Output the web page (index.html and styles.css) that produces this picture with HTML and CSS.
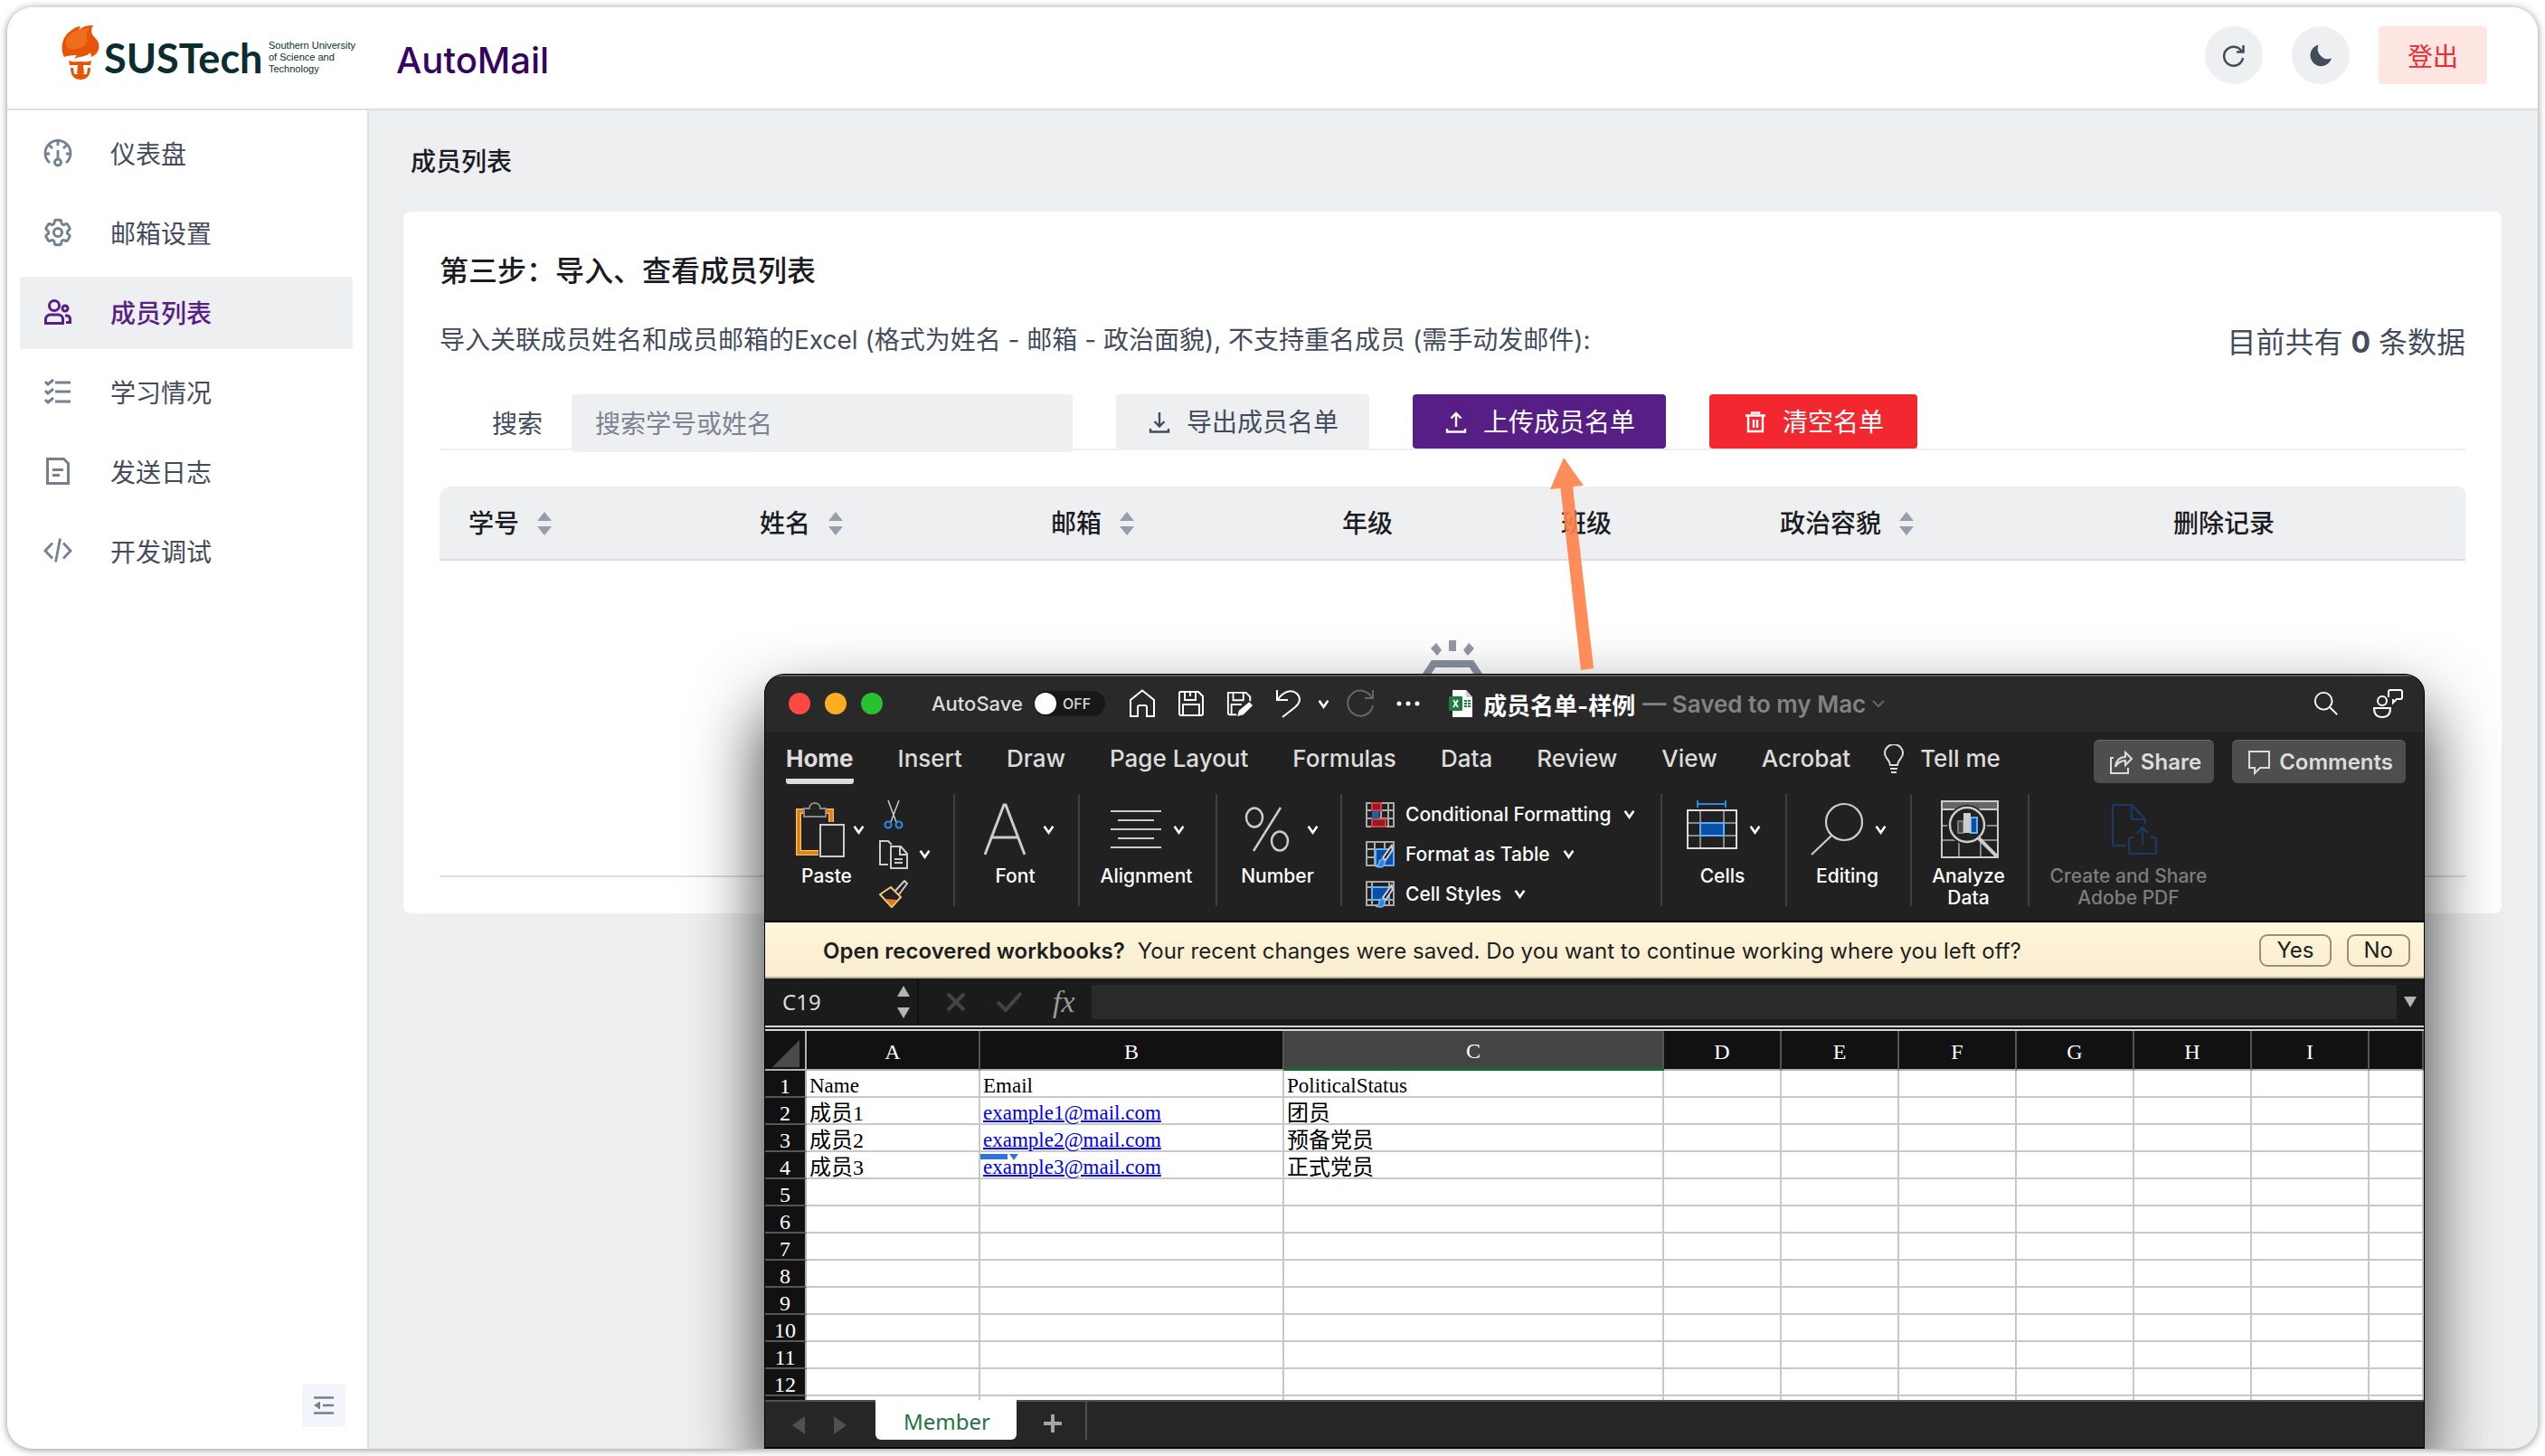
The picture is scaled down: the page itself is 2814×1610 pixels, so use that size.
FILE: index.html
```html
<!DOCTYPE html>
<html lang="zh-CN">
<head>
<meta charset="utf-8">
<title>AutoMail - 成员列表</title>
<meta name="viewport" content="width=device-width, initial-scale=1">
<link rel="stylesheet" href="styles.css">
</head>
<body>
<svg class="sprite" aria-hidden="true">
  <symbol id="chev" viewBox="0 0 12 12"><path d="M1.500 2.500L6 9l4.500-6.500" fill="none" stroke="currentColor" stroke-width="2.400"/></symbol>
  <symbol id="sort" viewBox="0 0 16 26"><path d="M8 0l8 10H0zM8 26l8-10H0z" fill="currentColor"/></symbol>
  <symbol id="brush" viewBox="0 0 20 28"><path d="M18 2L8 16l3 3L19 7z" fill="#222" stroke="#d0d0d0" stroke-width="2"/><path d="M0 26c4 0 3-3 4-6s5-3 6 0-1 7-5 7-5-1-5-1z" fill="#2f86dc" stroke="#7db8f0" stroke-width="1.500"/></symbol>
</svg>
<div class="frame">
  <header class="topbar">
    <div class="brand">
      <svg class="torch" viewBox="0 0 42 60" aria-hidden="true">
        <path d="M35 0c-5 9 1 12 4 16 5 7 2 16-6 19l-1-5c-4 5-11 4-18 7l3-4c-6 0-12 1-14 2C-1 28 0 17 5 11 10 5 17 1 21 1l-2 4c5-4 10-5 16-5z" fill="#e65405"/>
        <path d="M24 4C14 5 7 10 5 17c-2 8 5 11 12 9 8-1 12-6 11-12-1-5 0-7 3-11z" fill="#ee6e1e"/>
        <path d="M8 39c5 2 8 1 12 1s9 1 13-1l-1 5h-8l1 9-4 2-4-2 1-9h-9zM10 47h3l1 7h14l1-7h3c0 7-3 13-11 13s-11-6-11-13z" fill="#e65405"/>
      </svg>
      <span class="brand-name">SUSTech</span>
      <span class="brand-sub">Southern University<br>of Science and<br>Technology</span>
    </div>
    <h1 class="app-name">AutoMail</h1>
    <div class="top-actions">
      <button class="round" type="button" aria-label="刷新"><svg viewBox="0 0 24 24" fill="none" stroke="currentColor" stroke-width="2.500"><path d="M20.500 7.500A10.500 10.500 0 1 0 22 15M22.500 1v7.500H15" /></svg></button>
      <button class="round" type="button" aria-label="夜间模式"><svg viewBox="0 0 24 24" fill="currentColor"><path d="M9.500.5A12 12 0 1 0 24 15.500 11.500 11.500 0 0 1 9.500.5z"/></svg></button>
      <button class="logout" type="button">登出</button>
    </div>
  </header>
  <div class="body">
    <aside class="side">
      <nav class="menu">
        <a href="#"><svg viewBox="0 0 32 32" fill="none" stroke="currentColor" stroke-width="2.800"><path d="M7 27A14 14 0 1 1 25 27M16 2v6M6 7l4 4M26 7l-4 4M2 17h5M30 17h-5M16 13v10"/><circle cx="16" cy="26.500" r="3.500"/></svg>仪表盘</a>
        <a href="#"><svg viewBox="1.500 1.500 21 21" fill="none" stroke="currentColor" stroke-width="1.900"><path d="M9.594 3.940c.09-.542.56-.94 1.110-.94h2.593c.55 0 1.020.398 1.110.94l.213 1.281c.063.374.313.686.645.87.074.04.147.083.22.127.325.196.72.257 1.075.124l1.217-.456a1.125 1.125 0 0 1 1.370.49l1.296 2.247a1.125 1.125 0 0 1-.26 1.431l-1.003.827c-.293.241-.438.613-.43.992a7.723 7.723 0 0 1 0 .255c-.008.378.137.75.43.991l1.004.827c.424.35.534.955.26 1.430l-1.298 2.247a1.125 1.125 0 0 1-1.369.491l-1.217-.456c-.355-.133-.75-.072-1.076.124a6.470 6.470 0 0 1-.22.128c-.331.183-.581.495-.644.869l-.213 1.281c-.09.543-.56.94-1.110.94h-2.594c-.55 0-1.019-.398-1.110-.94l-.213-1.281c-.062-.374-.312-.686-.644-.87a6.520 6.520 0 0 1-.22-.127c-.325-.196-.72-.257-1.076-.124l-1.217.456a1.125 1.125 0 0 1-1.369-.49l-1.297-2.247a1.125 1.125 0 0 1 .26-1.431l1.004-.827c.292-.24.437-.613.43-.991a6.932 6.932 0 0 1 0-.255c.007-.38-.138-.751-.43-.992l-1.004-.827a1.125 1.125 0 0 1-.26-1.430l1.297-2.247a1.125 1.125 0 0 1 1.370-.491l1.216.456c.356.133.751.072 1.076-.124.072-.044.146-.086.22-.128.332-.183.582-.495.644-.869l.214-1.280z"/><circle cx="12" cy="12" r="3"/></svg>邮箱设置</a>
        <a href="#" class="active" aria-current="page"><svg viewBox="0 0 32 32" fill="none" stroke="currentColor" stroke-width="3"><circle cx="12" cy="9" r="5.500"/><path d="M2.500 28.500V24a5 5 0 0 1 5-5h9a5 5 0 0 1 5 5v4.500z"/><circle cx="24" cy="12" r="3"/><path d="M24 20h2a4 4 0 0 1 3.500 4v3.500H25"/></svg>成员列表</a>
        <a href="#"><svg viewBox="0 0 32 32" fill="none" stroke="currentColor" stroke-width="3"><path d="M13 6h17M13 16h17M13 27h17M2 5l3 3 6-5M2 15l3 3 6-5M2 25l3 3 6-5"/></svg>学习情况</a>
        <a href="#"><svg viewBox="0 0 32 32" fill="none" stroke="currentColor" stroke-width="3"><path d="M4.500 2.500h18l5 5v22h-23zM10 14.500h12M10 20.500h8"/></svg>发送日志</a>
        <a href="#"><svg viewBox="0 0 32 32" fill="none" stroke="currentColor" stroke-width="2.800"><path d="M10 7.500L2 16l8 8.500M22 7.500l8 8.500-8 8.500M18.500 2.500l-5 26"/></svg>开发调试</a>
      </nav>
      <button class="collapse" type="button" aria-label="收起菜单"><svg viewBox="0 0 22 20"><path d="M0 1.500h22M10 10h12M0 18.500h22" stroke="currentColor" stroke-width="2.600"/><path d="M7 5.500v9L0 10z" fill="currentColor"/></svg></button>
    </aside>
    <main class="main">
      <h2 class="crumb">成员列表</h2>
      <section class="card">
        <h3>第三步：导入、查看成员列表</h3>
        <div class="intro">
          <p>导入关联成员姓名和成员邮箱的Excel (格式为姓名 - 邮箱 - 政治面貌), 不支持重名成员 (需手动发邮件):</p>
          <p class="count">目前共有 <b>0</b> 条数据</p>
        </div>
        <form class="toolbar">
          <label for="q">搜索</label>
          <input id="q" type="text" placeholder="搜索学号或姓名">
          <button type="button" class="btn"><svg viewBox="0 0 24 24" fill="none" stroke="currentColor" stroke-width="2.400"><path d="M12 1v15M6.500 11l5.500 5.500 5.500-5.500M2 19v3.500h20V19"/></svg>导出成员名单</button>
          <button type="button" class="btn primary"><svg viewBox="0 0 24 24" fill="none" stroke="currentColor" stroke-width="2.400"><path d="M12 17V2M6.500 7.500L12 2l5.500 5.500M2 19v3.500h20V19"/></svg>上传成员名单</button>
          <button type="button" class="btn danger"><svg viewBox="0 0 24 24" fill="none" stroke="currentColor" stroke-width="2.400"><path d="M1 4.500h22M8 3V1.500h8V3M4 5v17h16V5M10 9v9M14 9v9"/></svg>清空名单</button>
        </form>
        <table class="members">
          <colgroup><col class="m-wide"><col class="m-wide"><col class="m-wide"><col class="m-mid"><col class="m-mid"><col class="m-pol"><col></colgroup>
          <thead><tr>
            <th>学号<svg><use href="#sort"/></svg></th><th>姓名<svg><use href="#sort"/></svg></th><th>邮箱<svg><use href="#sort"/></svg></th><th>年级</th><th>班级</th><th>政治容貌<svg><use href="#sort"/></svg></th><th class="center">删除记录</th>
          </tr></thead>
          <tbody><tr><td colspan="7"><svg class="empty" viewBox="0 0 96 100"><path d="M44 2h8v12h-8zM30 5l6 8-5 6-7-8zM66 5l-6 8 5 6 7-8z" fill="#9298a5"/><path d="M6 92V60L27 28h42l21 32v32z" fill="none" stroke="#8a91a0" stroke-width="8"/></svg></td></tr></tbody>
        </table>
      </section>
    </main>
  </div>

  <section class="excel" aria-label="成员名单-样例">
    <div class="x-title">
      <div class="lights"><i class="red"></i><i class="amber"></i><i class="green"></i></div>
      <span class="autosave">AutoSave</span>
      <label class="switch"><input type="checkbox" aria-label="AutoSave"><span>OFF</span></label>
      <div class="quick">
        <svg viewBox="0 0 30 32"><path d="M2 12L15 1.500 28 12v18h-8V20a2 2 0 0 0-2-2h-6a2 2 0 0 0-2 2v10H2z"/></svg>
        <svg viewBox="0 0 30 32"><path d="M3 3h20l5 5v19a2 2 0 0 1-2 2H4a2 2 0 0 1-2-2V4zM8 3v9h12V3M14 4v4M6 29V17h18v12"/></svg>
        <svg viewBox="0 0 32 32"><path d="M12 29H4a2 2 0 0 1-2-2V3h21l5 5v5M8 3v9h12V3M6 29V17h12"/><path d="M13 31l2-7 12-10 4 4-11 11z" fill="#fff" stroke="none"/></svg>
        <svg viewBox="0 0 30 32"><path d="M2 1v11h12M3 11C10 2 18 0 24 5c5 5 3 11-2 15L8 31"/></svg>
        <svg class="c"><use href="#chev"/></svg>
        <svg class="dim" viewBox="0 0 32 32"><path d="M30 1v9h-9M29 10A14 14 0 1 0 30 18"/></svg>
        <svg viewBox="0 0 26 32" class="dots"><circle cx="3" cy="16" r="2.500"/><circle cx="13" cy="16" r="2.500"/><circle cx="23" cy="16" r="2.500"/></svg>
      </div>
      <svg class="xl" viewBox="0 0 26 30"><path d="M4 0h15l7 8v22H4z" fill="#fff"/><path d="M19 0v8h7z" fill="#ccc"/><path d="M17 11h3v2h-3zM21 11h3v2h-3zM17 14h3v2h-3zM21 14h3v2h-3zM17 17h3v2h-3zM21 17h3v2h-3z" fill="#1d8048"/><rect y="7" width="15" height="16" rx="1" fill="#1d7c45"/><path d="M5 11l5 8M10 11l-5 8" stroke="#fff" stroke-width="1.800"/></svg>
      <b class="doc">成员名单-样例</b>
      <span class="saved">— Saved to my Mac</span>
      <svg class="saved-chev" viewBox="0 0 16 16"><path d="M2 5l6 6 6-6" fill="none" stroke="#666" stroke-width="2"/></svg>
      <div class="x-right">
        <svg viewBox="0 0 32 32"><circle cx="13" cy="13" r="10"/><path d="M20 20l9 9"/></svg>
        <svg viewBox="0 0 34 32"><circle cx="11" cy="13" r="5"/><path d="M2 21h18c0 7-3 10-9 10s-9-3-9-10zM18 9V3a2 2 0 0 1 2-2h11a2 2 0 0 1 2 2v6a2 2 0 0 1-2 2h-4l-4 4v-4"/></svg>
      </div>
    </div>
    <div class="x-tabs">
      <a href="#" class="on">Home</a><a href="#">Insert</a><a href="#">Draw</a><a href="#">Page Layout</a><a href="#">Formulas</a><a href="#">Data</a><a href="#">Review</a><a href="#">View</a><a href="#">Acrobat</a>
      <a href="#" class="tell"><svg viewBox="0 0 22 32"><path d="M7 23c0-6-6-7-6-13a10 10 0 0 1 20 0c0 6-6 7-6 13zM7 27h8M8 31h6"/></svg>Tell me</a>
      <div class="x-share">
        <button type="button"><svg viewBox="0 0 26 28"><path d="M5 9H2v17h19v-6M7 19c1-7 5-11 11-11V3l7 7-7 7v-5c-5 0-8 2-11 7z"/></svg>Share</button>
        <button type="button"><svg viewBox="0 0 26 28"><path d="M2 2h22v18H14l-6 6v-6H2z"/></svg>Comments</button>
      </div>
    </div>
    <div class="ribbon">
      <div class="grp first">
        <div class="tool"><div class="ico"><svg width="54" height="62" viewBox="0 0 54 62"><path d="M9 11H3v46h22M33 11h6v12" fill="none" stroke="#f7c66b" stroke-width="6"/><path d="M9 11H3v46h22M33 11h6v12" fill="none" stroke="#df7f14" stroke-width="3.500"/><path d="M9 8h6c0-8 12-8 12 0h6v9H9z" fill="#222" stroke="#8a8a8a" stroke-width="2"/><rect x="27" y="26" width="26" height="35" fill="#222" stroke="#ccc" stroke-width="2"/></svg><svg class="c"><use href="#chev"/></svg></div><span>Paste</span></div>
        <div class="stack">
          <div><svg width="32" height="32" viewBox="0 0 32 32" fill="none"><path d="M10 0l9 24M22 0l-9 24" stroke="#ccc" stroke-width="1.500"/><g stroke="#2f86dc" stroke-width="2.200"><circle cx="10" cy="27" r="3.500"/><circle cx="22" cy="27" r="3.500"/></g></svg></div>
          <div><svg width="32" height="32" viewBox="0 0 32 32" fill="none" stroke="#ccc" stroke-width="2"><path d="M10 27H1V1h9l4 4M13 7h11l7 8v16H13zM23 7v9h8M17 21h9M17 25h9"/></svg><svg class="c"><use href="#chev"/></svg></div>
          <div><svg width="32" height="32" viewBox="0 0 32 32"><path d="M18 12L28 1l3 3-9 12" fill="#222" stroke="#ccc" stroke-width="2"/><path d="M13 8l11 11-10 11L1 16z" fill="#222" stroke="#f3c877" stroke-width="2"/><path d="M7 21l13 1-6 7z" fill="#df7f14"/></svg></div>
        </div>
      </div>
      <div class="grp"><div class="ico far"><svg width="46" height="58" viewBox="0 0 46 58" fill="none" stroke="#ccc" stroke-width="3"><path d="M1 57L22 2h2l21 55M9 38h28"/></svg><svg class="c"><use href="#chev"/></svg></div><span>Font</span></div>
      <div class="grp wide"><div class="ico"><svg width="56" height="44" viewBox="0 0 56 44" stroke="#ccc" stroke-width="2"><path d="M0 2h56M8 12h40M0 22h56M8 32h40M0 42h56"/></svg><svg class="c"><use href="#chev"/></svg></div><span>Alignment</span></div>
      <div class="grp"><div class="ico far"><svg width="50" height="50" viewBox="0 0 50 50" fill="none" stroke="#ccc" stroke-width="2.500"><ellipse cx="11" cy="12" rx="9" ry="10.500"/><ellipse cx="39" cy="38" rx="9" ry="10.500"/><path d="M40 1L10 49"/></svg><svg class="c"><use href="#chev"/></svg></div><span>Number</span></div>
      <div class="grp styles">
        <div><svg width="32" height="28" viewBox="0 0 32 28"><path d="M1 1h30v26H1zM1 9h30M1 18h30M8 1v26M17 1v26M25 1v26" fill="none" stroke="#aaa" stroke-width="2"/><path d="M7 9h8v10H7z" fill="#1c5fa8"/><path d="M7 1h10v8H7zM7 19h15v8H7z" fill="#951920" stroke="#d93b44" stroke-width="2"/></svg>Conditional Formatting<svg class="c"><use href="#chev"/></svg></div>
        <div><svg width="32" height="30" viewBox="0 0 32 30"><path d="M1 1h30v26H1zM1 9h30M1 18h30M10 1v26M21 1v26" fill="none" stroke="#aaa" stroke-width="2"/><path d="M11 9h20v18H11z" fill="#0a4fa8" stroke="#62aef0" stroke-width="2"/><use href="#brush" x="9" y="3" width="24" height="27"/></svg>Format as Table<svg class="c"><use href="#chev"/></svg></div>
        <div><svg width="32" height="30" viewBox="0 0 32 30"><path d="M1 1h30v26H1zM1 7h30M1 21h30M7 1v26M26 1v26" fill="none" stroke="#aaa" stroke-width="2"/><path d="M7 7h19v14H7z" fill="#0a4fa8" stroke="#62aef0" stroke-width="2"/><use href="#brush" x="9" y="3" width="24" height="27"/></svg>Cell Styles<svg class="c"><use href="#chev"/></svg></div>
      </div>
      <div class="grp"><div class="ico"><svg width="56" height="66" viewBox="0 0 56 66" fill="none" stroke-width="2"><path d="M12 1v8M43 1v8M12 5h31" stroke="#2f86dc"/><path d="M15 12v42M41 12v42M1 26h54M1 40h54" stroke="#888"/><path d="M1 12h54v42H1z" stroke="#ddd"/><path d="M15 26h26v14H15z" fill="#0a4fa8" stroke="#62aef0"/></svg><svg class="c"><use href="#chev"/></svg></div><span>Cells</span></div>
      <div class="grp"><div class="ico"><svg width="58" height="60" viewBox="0 0 58 60" fill="none" stroke="#ccc" stroke-width="2.200"><circle cx="37" cy="22" r="20"/><path d="M23 37L1 58"/></svg><svg class="c"><use href="#chev"/></svg></div><span>Editing</span></div>
      <div class="grp narrow"><div class="ico"><svg width="64" height="64" viewBox="0 0 64 64" fill="none" stroke-width="2"><path d="M1 1h62v9H1z" fill="#666"/><path d="M1 28h62M1 44h62M20 44v20M44 44v20" stroke="#888"/><path d="M1 1h62v62H1zM1 10h62" stroke="#ccc"/><circle cx="29" cy="27" r="22" fill="#222"/><circle cx="29" cy="27" r="19" stroke="#ccc" stroke-width="2.500"/><path d="M42 42l21 21" stroke="#ccc" stroke-width="4"/><path d="M19 23h6v13h-6z" fill="#444" stroke="#777"/><path d="M33 19h7v17h-7z" fill="#0a4fa8" stroke="#62aef0"/><path d="M25 14h8v22h-8z" fill="#ccc"/></svg></div><span>Analyze<br>Data</span></div>
      <div class="grp last"><div class="ico"><svg width="50" height="56" viewBox="0 0 50 56" fill="none" stroke="#1d3a66" stroke-width="2.200"><path d="M16 46H3a2 2 0 0 1-2-2V3a2 2 0 0 1 2-2h19l15 16v5M22 1v14a2 2 0 0 0 2 2h13M25 37h-4a2 2 0 0 0-2 2v14a2 2 0 0 0 2 2h26a2 2 0 0 0 2-2V39a2 2 0 0 0-2-2h-4M34 45V26M28 32l6-6 6 6"/></svg></div><span>Create and Share<br>Adobe PDF</span></div>
    </div>
    <div class="notice"><b>Open recovered workbooks?</b><span>Your recent changes were saved. Do you want to continue working where you left off?</span><div><button type="button">Yes</button><button type="button">No</button></div></div>
    <div class="formula">
      <div class="namebox">C19<svg width="14" height="36" viewBox="0 0 14 36"><path d="M7 0l7 12H0zM7 36l7-12H0z" fill="#b5b5b5"/></svg></div>
      <svg width="22" height="22" viewBox="0 0 22 22"><path d="M2 2l18 18M20 2L2 20" stroke="#444" stroke-width="4"/></svg>
      <svg width="28" height="22" viewBox="0 0 28 22"><path d="M1 11l9 9L27 1" stroke="#444" stroke-width="4" fill="none"/></svg>
      <i class="fx">fx</i>
      <input type="text" aria-label="Formula">
      <svg class="drop" width="14" height="12" viewBox="0 0 14 12"><path d="M0 0h14L7 12z" fill="#b5b5b5"/></svg>
    </div>
    <div class="sheet">
      <table>
        <colgroup><col class="s-n"><col class="s-a"><col class="s-b"><col class="s-c"><col class="s-d"><col class="s-d"><col class="s-d"><col class="s-d"><col class="s-d"><col class="s-d"><col></colgroup>
        <thead><tr><th class="corner"><svg width="30" height="30" viewBox="0 0 30 30"><path d="M30 0v30H0z" fill="#4a4a4a"/></svg></th><th>A</th><th>B</th><th class="sel">C</th><th>D</th><th>E</th><th>F</th><th>G</th><th>H</th><th>I</th><th></th></tr></thead>
        <tbody>
          <tr><th>1</th><td class="latin">Name</td><td class="latin">Email</td><td class="latin">PoliticalStatus</td><td></td><td></td><td></td><td></td><td></td><td></td><td></td></tr>
          <tr><th>2</th><td>成员1</td><td class="latin"><a href="#">example1@mail.com</a></td><td>团员</td><td></td><td></td><td></td><td></td><td></td><td></td><td></td></tr>
          <tr><th>3</th><td>成员2</td><td class="latin"><a href="#">example2@mail.com</a></td><td>预备党员</td><td></td><td></td><td></td><td></td><td></td><td></td><td></td></tr>
          <tr><th>4</th><td>成员3</td><td class="latin mark"><a href="#">example3@mail.com</a><svg width="42" height="8" viewBox="0 0 42 8"><path d="M0 0h30v6H0zM32 0h10l-5 7z" fill="#2f74d8"/></svg></td><td>正式党员</td><td></td><td></td><td></td><td></td><td></td><td></td><td></td></tr>
          <tr><th>5</th><td></td><td></td><td></td><td></td><td></td><td></td><td></td><td></td><td></td><td></td></tr>
          <tr><th>6</th><td></td><td></td><td></td><td></td><td></td><td></td><td></td><td></td><td></td><td></td></tr>
          <tr><th>7</th><td></td><td></td><td></td><td></td><td></td><td></td><td></td><td></td><td></td><td></td></tr>
          <tr><th>8</th><td></td><td></td><td></td><td></td><td></td><td></td><td></td><td></td><td></td><td></td></tr>
          <tr><th>9</th><td></td><td></td><td></td><td></td><td></td><td></td><td></td><td></td><td></td><td></td></tr>
          <tr><th>10</th><td></td><td></td><td></td><td></td><td></td><td></td><td></td><td></td><td></td><td></td></tr>
          <tr><th>11</th><td></td><td></td><td></td><td></td><td></td><td></td><td></td><td></td><td></td><td></td></tr>
          <tr><th>12</th><td></td><td></td><td></td><td></td><td></td><td></td><td></td><td></td><td></td><td></td></tr>
          <tr><th></th><td></td><td></td><td></td><td></td><td></td><td></td><td></td><td></td><td></td><td></td></tr>
        </tbody>
      </table>
    </div>
    <div class="sheetbar">
      <svg width="60" height="20" viewBox="0 0 60 20"><path d="M14 0v20L0 10zM46 0v20l14-10z" fill="#505050"/></svg>
      <button type="button" class="sheet-tab">Member</button>
      <button type="button" class="plus" aria-label="Add sheet"><svg width="20" height="20" viewBox="0 0 20 20"><path d="M10 0v20M0 10h20" stroke="#a5a5a5" stroke-width="4"/></svg></button>
    </div>
  </section>

  <svg class="arrow" viewBox="0 0 50 236" aria-hidden="true"><path d="M15 0l22 31-12 1 23 201-14 2L11.500 34 0 35z" fill="#fe8149" fill-opacity=".9"/></svg>
</div>
</body>
</html>
```
FILE: styles.css
```css
* { box-sizing: border-box; }
body {
  margin: 0;
  padding: 8px;
  background: #fff;
  font-family: Inter, "Noto Sans CJK SC", sans-serif;
  font-size: 28px;
  color: #434c5c;
}
button, input { font: inherit; color: inherit; border: 0; margin: 0; }
button { cursor: pointer; padding: 0; }
a { color: inherit; text-decoration: none; }
h1, h2, h3, p { margin: 0; font-weight: 500; }
svg { display: block; flex: none; }
.sprite { position: absolute; width: 0; height: 0; }

.frame {
  position: relative;
  display: flex;
  flex-direction: column;
  min-height: calc(100vh - 16px);
  border-radius: 28px;
  overflow: clip;
  background: #eeeff1;
  box-shadow: 0 1px 8px rgba(0, 0, 0, .45);
}

/* top bar */
.topbar {
  display: flex;
  align-items: center;
  height: 114px;
  padding: 0 56px 0 60px;
  background: #fff;
  border-bottom: 2px solid #dddde4;
}
.brand { display: flex; align-items: center; width: 370px; color: #0b2d30; }
.torch { width: 42px; height: 60px; margin-right: 5px; margin-bottom: 12px; }
.brand-name { width: 178px; font: 700 45px/48px Lato, sans-serif; }
.brand-sub { margin-left: 4px; margin-bottom: 2px; font: 11px/13px "Liberation Sans", sans-serif; white-space: nowrap; }
.app-name { font-size: 40px; line-height: 48px; color: #35045f; padding-top: 5px; }
.top-actions { display: flex; gap: 32px; margin-left: auto; margin-bottom: 6px; }
.round { width: 64px; height: 64px; border-radius: 50%; background: #eeeff1; }
.round svg { width: 24px; height: 24px; margin: 0 auto; overflow: visible; }
.logout { width: 120px; height: 64px; border-radius: 4px; background: #fee6e2; color: #f22730; }

/* side menu */
.body { display: flex; flex: 1; }
.side {
  display: flex;
  flex-direction: column;
  justify-content: space-between;
  width: 400px;
  padding: 8px 14px 24px;
  background: #fff;
  border-right: 2px solid #dfe1e6;
}
.menu { display: flex; flex-direction: column; gap: 8px; }
.menu a { display: flex; align-items: center; gap: 42px; width: 368px; height: 80px; padding: 0 26px 3px; border-radius: 4px; }
.menu svg { width: 32px; height: 32px; color: #75808e; }
.menu .active { background: #eeeff1; color: #591e87; font-weight: 500; }
.menu .active svg { color: #591e87; }
.collapse { align-self: flex-end; width: 48px; height: 48px; margin-right: 10px; border-radius: 4px; background: #f4f5fa; color: #75808e; }
.collapse svg { width: 22px; height: 20px; margin: 0 auto; }

/* content */
.main { flex: 1; padding: 33px 40px 40px 38px; }
.crumb { padding-left: 8px; margin-bottom: 31px; font-size: 28px; line-height: 48px; color: #1b1c23; }
.card { padding: 42px 40px 40px; border-radius: 8px; background: #fff; }
.card h3 { font-size: 32px; line-height: 48px; color: #1b1c23; }
.intro { display: flex; justify-content: space-between; align-items: center; margin: 32px 0 40px; line-height: 40px; }
.intro p { font-weight: 400; }
.intro .count { font-size: 32px; padding-top: 6px; line-height: 34px; }
.toolbar { display: flex; align-items: flex-start; height: 62px; padding-left: 58px; border-bottom: 2px solid #eeeff1; line-height: 60px; }
.toolbar label { width: 88px; padding-top: 3px; }
.toolbar input { width: 554px; height: 64px; padding: 2px 26px 0; border-radius: 4px; background: #eeeff1; }
.toolbar input::placeholder { color: #7a8492; opacity: 1; }
.btn { display: flex; align-items: center; justify-content: center; gap: 18px; height: 60px; min-width: 230px; margin-left: 48px; padding: 2px 34px 0 36px; border-radius: 4px; background: #eeeff1; line-height: 58px; white-space: nowrap; }
.btn svg { width: 24px; height: 24px; }
.primary { background: #571f85; color: #fff; }
.danger { background: #f22730; color: #fff; }
.members { width: 100%; margin-top: 40px; table-layout: fixed; border-collapse: separate; border-spacing: 0; }
.members th { height: 82px; padding: 2px 0 0 32px; text-align: left; font-weight: 500; line-height: 40px; color: #1b1c23; background: #eeeff1; border-bottom: 2px solid #dcdee5; white-space: nowrap; }
.members th:first-child { border-top-left-radius: 12px; }
.members th:last-child { border-top-right-radius: 8px; }
.members .center { padding-left: 0; text-align: center; }
.members th svg { display: inline-block; width: 16px; height: 26px; margin-left: 20px; vertical-align: -3px; color: #989daa; }
.members td { height: 350px; padding: 86px 0 0; border-bottom: 2px solid #dcdee5; vertical-align: top; }
.m-wide { width: 322px; }
.m-mid { width: 242px; }
.m-pol { width: 256px; }
.empty { width: 96px; height: 100px; margin: 0 auto; }

/* spreadsheet window, floating over the page */
.excel {
  position: absolute;
  top: 737px;
  left: 837px;
  right: 125px;
  bottom: 0;
  display: flex;
  flex-direction: column;
  border: 1px solid #000;
  border-bottom: 0;
  border-radius: 22px 22px 0 0;
  overflow: clip;
  background: #212121;
  color: #dcdcdc;
  font-size: 24px;
  box-shadow: 0 40px 80px rgba(0, 0, 0, .8);
}
.excel .c { width: 13px; height: 13px; color: #fff; }
.x-title { display: flex; align-items: center; height: 64px; padding: 0 23px 2px 26px; background: #292929; border-top: 2px solid #5b5b5b; white-space: nowrap; }
.lights { display: flex; gap: 16px; width: 158px; }
.lights i { width: 24px; height: 24px; border-radius: 50%; }
.red { background: #ff4744; }
.amber { background: #ffae24; }
.green { background: #27c132; }
.autosave { width: 113px; font-size: 22px; font-weight: 500; }
.switch { display: flex; align-items: center; width: 79px; height: 28px; border-radius: 14px; background: #181818; font-size: 16px; font-weight: 500; }
.switch input { appearance: none; width: 24px; height: 24px; margin: 0 7px 0 1px; border-radius: 50%; background: #fff; }
.quick { display: flex; align-items: center; gap: 24px; margin-left: 26px; }
.quick svg, .x-right svg { width: 30px; height: 32px; fill: none; stroke: #fff; stroke-width: 2; }
.quick .c { margin: 0 -6px 0 -7px; }
.quick .dim { stroke: #666; width: 32px; }
.quick .dots { width: 26px; fill: #fff; stroke: none; }
.xl { width: 26px; height: 30px; margin: 0 12px 0 32px; }
.doc { font-size: 26px; color: #fff; }
.saved { margin-left: 8px; font-size: 26px; font-weight: 600; color: #838383; }
.saved-chev { width: 16px; height: 16px; margin-left: 6px; }
.x-right { display: flex; gap: 36px; margin-left: auto; }
.x-right svg:last-child { width: 34px; }
.x-tabs { display: flex; align-items: flex-start; gap: 49px; height: 68px; padding: 8px 20px 0 23px; font-size: 26px; font-weight: 500; white-space: nowrap; }
.x-tabs a { display: block; height: 49px; line-height: 42px; }
.x-tabs .on { font-weight: 700; border-bottom: 6px solid #dcdcdc; border-radius: 3px; }
.x-tabs .tell { display: flex; gap: 18px; margin-left: -12px; }
.tell svg { width: 22px; height: 32px; margin-top: 5px; }
.x-tabs svg { fill: none; stroke: #dcdcdc; stroke-width: 2; }
.x-share { display: flex; gap: 20px; margin-left: auto; }
.x-share button { display: flex; align-items: center; gap: 9px; height: 48px; padding: 0 14px 0 17px; border-radius: 6px; background: #4e4e4e; border-top: 1px solid #6a6a6a; font-size: 24px; font-weight: 600; }
.x-share svg { width: 26px; height: 28px; }
.ribbon { display: flex; height: 142px; padding-bottom: 16px; border-bottom: 2px solid #000; font-size: 21px; line-height: 24px; font-weight: 500; color: #fff; white-space: nowrap; }
.grp { width: 138px; height: 124px; border-right: 2px solid #404040; text-align: center; }
.grp span { display: block; padding-top: 1px; padding-right: 3px; }
.ico { display: flex; align-items: center; justify-content: center; gap: 13px; height: 78px; }
.far { gap: 19px; padding-left: 6px; }
.first { display: flex; gap: 16px; width: 210px; padding-left: 34px; }
.first .ico { gap: 9px; }
.first .tool span { padding-right: 8px; }
.stack div, .styles div { display: flex; align-items: center; gap: 12px; height: 44px; padding-top: 1px; }
.wide { width: 152px; }
.styles { width: 354px; padding-left: 26px; }
.styles div .c { margin-left: 2px; }
.narrow { width: 130px; }
.last { width: 222px; border: 0; color: #7d7d7d; }
.last .ico { padding-left: 10px; }
.notice { display: flex; align-items: center; height: 62px; padding: 2px 15px 0 64px; background: linear-gradient(#fff5da, #f8edcf); border-bottom: 2px solid #b9b496; color: #1e1e1e; white-space: nowrap; }
.notice b { margin-right: 14px; font-weight: 600; }
.notice div { display: flex; gap: 17px; margin-left: auto; }
.notice button { height: 36px; padding: 0 17px; border: 2px solid #989078; border-radius: 9px; background: none; line-height: 32px; }
.formula { display: flex; align-items: center; height: 58px; padding: 0 8px 0 19px; background: #1b1b1b; border-bottom: 6px double #d6d6d6; }
.namebox { display: flex; align-items: center; justify-content: space-between; width: 151px; height: 50px; padding-right: 8px; margin-right: 30px; border-right: 2px solid #111; font: 24px/32px "Noto Sans", sans-serif; }
.formula > svg + svg { margin-left: 34px; }
.fx { margin-left: 34px; width: 43px; font: italic 34px "Liberation Serif", serif; color: #999; }
.formula input { flex: 1; height: 38px; padding: 0 8px; background: #2a2a2a; }
.formula .drop { margin-left: 8px; }
.sheet { flex: 1; min-height: 0; overflow: clip; background: #fff; }
.sheet table { width: 100%; table-layout: fixed; border-collapse: separate; border-spacing: 0; font: 24px/22px "Liberation Serif", "Noto Sans CJK SC", serif; color: #000; }
.sheet th, .sheet td { padding: 0; border-right: 2px solid #c8c8c8; border-bottom: 2px solid #c8c8c8; }
.sheet tbody tr { height: 30px; }
.sheet tbody th { padding-top: 6px; }
.sheet td { padding: 6px 0 0 3px; white-space: nowrap; }
.sheet .latin { font-size: 23px; }
.sheet th { background: #111; color: #fff; font-weight: 400; text-align: center; border-bottom-color: #555; border-right-color: #555; }
.sheet tr th:first-child { border-right-color: #b0b0b0; }
.sheet thead th { height: 44px; padding: 3px 0 0; border-bottom-color: #b0b0b0; }
.sheet thead .sel { background: #444; border-bottom: 4px solid #1d6336; }
.sheet th.corner svg { margin: 4px 4px 0 8px; }
.sheet a { color: #0000ee; text-decoration: underline; text-decoration-thickness: 2px; }
.mark { position: relative; }
.mark svg { position: absolute; left: 0; top: 2px; }
.s-n { width: 46px; }
.s-a { width: 192px; }
.s-b { width: 336px; }
.s-c { width: 420px; }
.s-d { width: 130px; }
.sheetbar { display: flex; height: 54px; padding-left: 30px; background: #262626; border-top: 2px solid #505050; border-bottom: 2px solid #050505; }
.sheetbar > svg { margin-top: 16px; }
.sheet-tab { width: 156px; height: 44px; margin: -2px 0 0 32px; padding: 3px 0 0 2px; border-radius: 0 0 6px 6px; background: #fff; color: #217346; font: 24px "Noto Sans", sans-serif; }
.plus { width: 78px; height: 42px; padding: 5px 0 0 3px; background: none; border-right: 2px solid #505050; }
.plus svg { margin: 0 auto; }

/* pointer from the sample workbook to the upload button */
.arrow { position: absolute; left: 1706px; top: 498px; width: 50px; height: 236px; }
```
